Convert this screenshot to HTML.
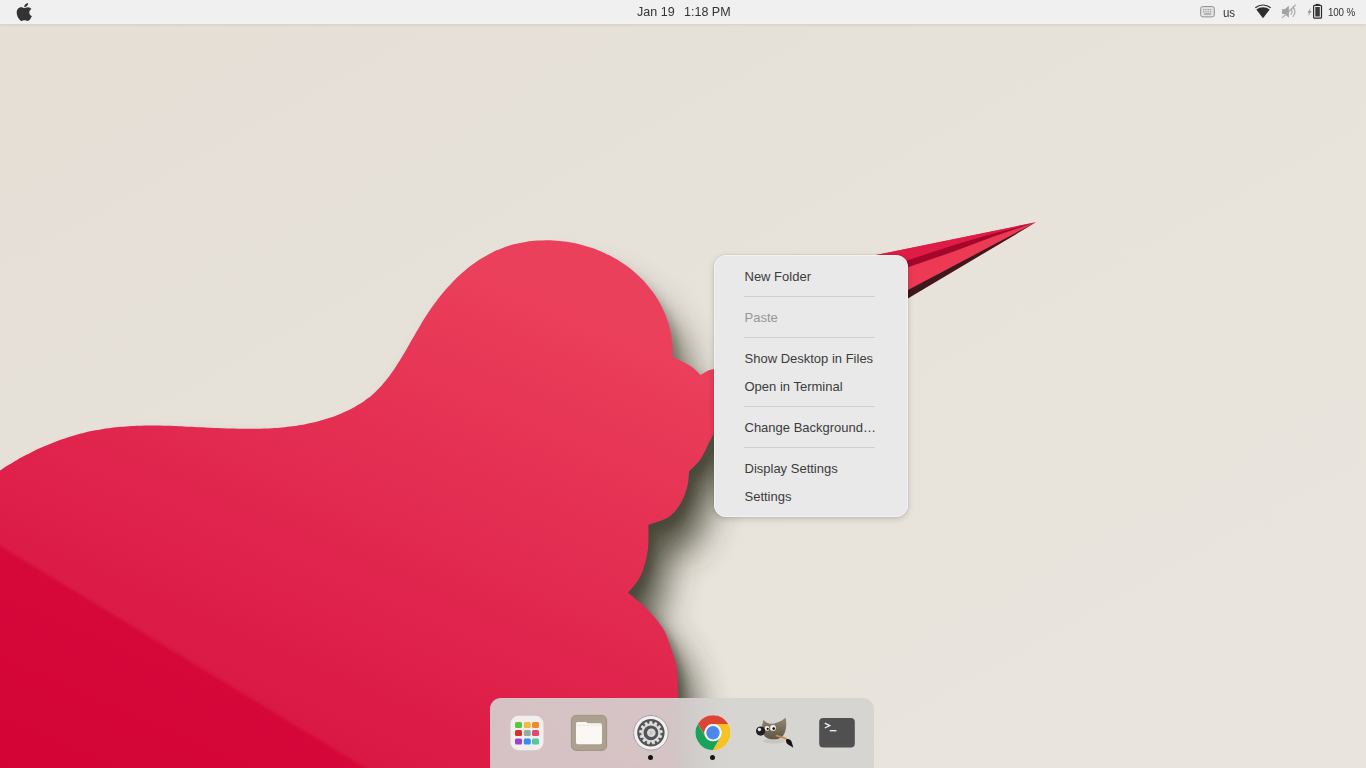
<!DOCTYPE html>
<html><head><meta charset="utf-8">
<style>
html,body{margin:0;padding:0;width:1366px;height:768px;overflow:hidden}
body{position:relative;font-family:"Liberation Sans",sans-serif;background:#e6e1da}
#wall{position:absolute;left:0;top:0;width:1366px;height:768px}
#topbar{position:absolute;left:0;top:0;width:1366px;height:24px;background:linear-gradient(#f0f0f2 0,#f0f0f0 19px,#f3f2ee 24px);color:#333;box-shadow:0 1px 3px rgba(60,55,40,0.10)}
.tb{position:absolute;top:0;height:24px;line-height:24px;font-size:12px;white-space:nowrap}
#menu{position:absolute;left:714px;top:255px;width:194px;height:262px;background:#e9e9e9;border-radius:12px;box-shadow:inset 0 0 0 1px rgba(255,255,255,0.45),0 0 0 1px rgba(0,0,0,0.04),0 2px 6px rgba(0,0,0,0.16)}
.mi{position:absolute;left:30.5px;font-size:13px;color:#3c3c3c;white-space:nowrap;line-height:16px}
.sep{position:absolute;left:30px;width:131px;height:1px;background:#cfcfcf}
#dock{position:absolute;left:490px;top:698px;width:384px;height:80px;border-radius:11px;background:rgba(213,211,209,0.91);-webkit-backdrop-filter:blur(14px);backdrop-filter:blur(14px)}
.ic{position:absolute}
.dot{position:absolute;width:5px;height:5px;border-radius:50%;background:#1a1a1a}
</style></head><body>
<svg id="wall" width="1366" height="768" viewBox="0 0 1366 768">
<defs>
<linearGradient id="bg" x1="0" y1="0" x2="1" y2="1"><stop offset="0" stop-color="#e5dfd6"/><stop offset="1" stop-color="#e9e5de"/></linearGradient>
<linearGradient id="red" x1="0" y1="1" x2="0.6" y2="0"><stop offset="0" stop-color="#d40c3a"/><stop offset="0.5" stop-color="#e0244d"/><stop offset="1" stop-color="#eb405b"/></linearGradient>
<filter id="bl1" x="-30%" y="-30%" width="160%" height="160%"><feGaussianBlur stdDeviation="17"/></filter>
<filter id="bl2" x="-30%" y="-30%" width="160%" height="160%"><feGaussianBlur stdDeviation="5"/></filter>
<linearGradient id="shg" gradientUnits="userSpaceOnUse" x1="0" y1="230" x2="0" y2="460"><stop offset="0" stop-color="#fff" stop-opacity="0.3"/><stop offset="0.45" stop-color="#fff" stop-opacity="0.75"/><stop offset="1" stop-color="#fff" stop-opacity="1"/></linearGradient>
<mask id="shm" maskUnits="userSpaceOnUse" x="0" y="0" width="1366" height="768"><rect width="1366" height="768" fill="url(#shg)"/></mask>
<filter id="soft" x="-10%" y="-10%" width="120%" height="120%"><feGaussianBlur stdDeviation="1.5"/></filter>
</defs>
<rect width="1366" height="768" fill="url(#bg)"/>
<clipPath id="cp"><path d="M-9.7 477.3 C-9.0 476.8 -6.9 475.3 -5.5 474.3 C-4.1 473.3 -2.6 472.3 -1.2 471.3 C0.2 470.3 1.6 469.3 3.1 468.4 C4.6 467.4 6.1 466.5 7.6 465.6 C9.1 464.7 10.6 463.8 12.1 462.9 C13.6 462.0 15.1 461.1 16.6 460.2 C18.1 459.3 19.6 458.5 21.2 457.6 C22.8 456.8 24.3 455.9 25.9 455.1 C27.5 454.3 29.0 453.5 30.6 452.7 C32.2 451.9 33.8 451.1 35.4 450.3 C37.0 449.5 38.6 448.8 40.2 448.1 C41.8 447.4 43.5 446.7 45.1 446.0 C46.7 445.3 48.4 444.6 50.0 443.9 C51.6 443.2 53.2 442.6 54.9 442.0 C56.5 441.4 58.2 440.7 59.9 440.1 C61.6 439.5 63.2 439.0 64.9 438.4 C66.6 437.8 68.2 437.2 69.9 436.7 C71.6 436.2 73.3 435.7 75.0 435.2 C76.7 434.7 78.3 434.2 80.0 433.8 C81.7 433.4 83.4 432.9 85.1 432.5 C86.8 432.1 88.5 431.7 90.2 431.3 C91.9 430.9 93.7 430.6 95.4 430.3 C97.1 430.0 98.8 429.7 100.5 429.4 C102.2 429.1 103.9 428.9 105.6 428.6 C107.3 428.4 109.1 428.1 110.8 427.9 C112.5 427.7 114.2 427.5 115.9 427.3 C117.6 427.1 119.4 427.0 121.1 426.8 C122.8 426.6 124.6 426.5 126.3 426.4 C128.0 426.3 129.8 426.2 131.5 426.1 C133.2 426.0 135.0 425.9 136.7 425.8 C138.4 425.7 140.2 425.7 141.9 425.7 C143.6 425.7 145.3 425.6 147.1 425.6 C148.8 425.6 150.7 425.6 152.4 425.6 C154.2 425.6 155.8 425.6 157.6 425.6 C159.3 425.6 161.2 425.7 162.9 425.7 C164.7 425.7 166.3 425.8 168.1 425.8 C169.8 425.9 171.6 425.9 173.4 426.0 C175.2 426.1 176.9 426.1 178.7 426.2 C180.5 426.3 182.2 426.3 184.0 426.4 C185.8 426.5 187.5 426.6 189.3 426.7 C191.1 426.8 192.8 426.8 194.6 426.9 C196.4 427.0 198.1 427.1 199.9 427.2 C201.7 427.3 203.4 427.3 205.2 427.4 C207.0 427.5 208.7 427.6 210.5 427.7 C212.3 427.8 214.0 427.9 215.8 428.0 C217.6 428.1 219.4 428.1 221.2 428.2 C223.0 428.3 224.7 428.3 226.5 428.4 C228.3 428.5 230.1 428.6 231.9 428.6 C233.7 428.7 235.4 428.7 237.2 428.7 C239.0 428.7 240.7 428.8 242.5 428.8 C244.3 428.8 246.0 428.8 247.8 428.8 C249.6 428.8 251.4 428.8 253.2 428.8 C255.0 428.8 256.7 428.8 258.5 428.8 C260.3 428.8 262.1 428.7 263.8 428.6 C265.6 428.5 267.2 428.5 269.0 428.4 C270.8 428.3 272.5 428.2 274.3 428.1 C276.1 428.0 277.9 427.9 279.6 427.7 C281.4 427.5 283.1 427.4 284.8 427.2 C286.5 427.0 288.3 426.8 290.0 426.6 C291.7 426.4 293.5 426.1 295.2 425.9 C296.9 425.6 298.7 425.4 300.4 425.1 C302.1 424.8 303.8 424.5 305.5 424.2 C307.2 423.9 309.0 423.5 310.7 423.1 C312.4 422.7 314.0 422.3 315.7 421.9 C317.4 421.5 319.1 421.1 320.8 420.6 C322.5 420.1 324.1 419.6 325.8 419.1 C327.5 418.6 329.1 418.1 330.8 417.5 C332.5 416.9 334.2 416.3 335.8 415.7 C337.4 415.1 339.1 414.4 340.7 413.7 C342.3 413.0 344.0 412.3 345.6 411.6 C347.2 410.9 348.8 410.1 350.4 409.3 C352.0 408.5 353.6 407.7 355.1 406.8 C356.6 405.9 358.1 405.0 359.6 404.1 C361.1 403.2 362.6 402.2 364.0 401.2 C365.4 400.2 366.8 399.2 368.2 398.1 C369.6 397.1 370.8 396.0 372.1 394.9 C373.4 393.8 374.7 392.6 375.9 391.4 C377.1 390.2 378.3 388.9 379.5 387.7 C380.7 386.4 381.8 385.2 382.9 383.9 C384.0 382.6 385.1 381.3 386.2 380.0 C387.3 378.7 388.4 377.3 389.4 375.9 C390.4 374.5 391.4 373.1 392.4 371.7 C393.4 370.3 394.3 368.8 395.3 367.4 C396.3 365.9 397.2 364.5 398.2 363.0 C399.1 361.5 400.1 360.0 401.0 358.5 C401.9 357.0 402.8 355.5 403.7 354.0 C404.6 352.5 405.5 350.9 406.4 349.4 C407.3 347.9 408.2 346.4 409.1 344.8 C410.0 343.2 410.8 341.7 411.7 340.1 C412.6 338.6 413.5 337.1 414.4 335.5 C415.3 333.9 416.2 332.4 417.1 330.8 C418.0 329.2 418.9 327.7 419.8 326.2 C420.7 324.7 421.6 323.1 422.5 321.6 C423.4 320.1 424.4 318.5 425.4 317.0 C426.4 315.5 427.3 314.0 428.3 312.5 C429.3 311.0 430.3 309.6 431.3 308.1 C432.3 306.7 433.3 305.2 434.4 303.8 C435.4 302.4 436.5 300.9 437.6 299.5 C438.7 298.1 439.8 296.7 440.9 295.3 C442.0 293.9 443.1 292.5 444.2 291.2 C445.3 289.9 446.5 288.6 447.7 287.3 C448.9 286.0 450.1 284.7 451.3 283.4 C452.5 282.1 453.7 280.9 454.9 279.7 C456.1 278.5 457.3 277.2 458.6 276.0 C459.9 274.8 461.2 273.7 462.5 272.6 C463.8 271.5 465.1 270.3 466.4 269.2 C467.7 268.1 469.0 267.0 470.4 266.0 C471.8 265.0 473.2 264.0 474.6 263.0 C476.0 262.0 477.4 261.0 478.8 260.1 C480.2 259.2 481.7 258.3 483.1 257.4 C484.6 256.5 486.0 255.7 487.5 254.9 C489.0 254.1 490.6 253.3 492.1 252.5 C493.6 251.7 495.1 251.0 496.7 250.3 C498.2 249.6 499.8 249.0 501.4 248.4 C503.0 247.8 504.7 247.2 506.3 246.6 C507.9 246.0 509.5 245.6 511.2 245.1 C512.9 244.6 514.6 244.2 516.3 243.8 C518.0 243.4 519.7 243.0 521.4 242.7 C523.1 242.4 524.9 242.1 526.6 241.8 C528.4 241.5 530.1 241.3 531.9 241.1 C533.7 240.9 535.4 240.7 537.2 240.6 C539.0 240.5 540.8 240.4 542.6 240.4 C544.4 240.4 546.2 240.3 548.0 240.3 C549.8 240.3 551.6 240.4 553.4 240.5 C555.2 240.6 557.1 240.7 558.9 240.9 C560.7 241.1 562.5 241.3 564.3 241.5 C566.1 241.7 567.8 242.0 569.6 242.3 C571.4 242.6 573.2 242.9 575.0 243.3 C576.8 243.7 578.5 244.1 580.2 244.5 C581.9 244.9 583.7 245.4 585.4 245.9 C587.1 246.4 588.9 246.9 590.6 247.4 C592.3 247.9 593.9 248.6 595.6 249.2 C597.3 249.8 599.0 250.5 600.6 251.2 C602.2 251.9 603.8 252.7 605.4 253.4 C607.0 254.2 608.6 254.9 610.2 255.7 C611.8 256.5 613.3 257.3 614.8 258.2 C616.3 259.1 617.8 260.0 619.3 260.9 C620.8 261.8 622.3 262.8 623.7 263.8 C625.1 264.8 626.5 265.8 627.9 266.8 C629.3 267.8 630.6 268.9 632.0 270.0 C633.4 271.1 634.7 272.2 636.0 273.4 C637.3 274.5 638.6 275.7 639.8 276.9 C641.0 278.1 642.2 279.4 643.4 280.6 C644.6 281.9 645.7 283.1 646.8 284.4 C647.9 285.7 649.0 287.0 650.1 288.4 C651.2 289.8 652.2 291.1 653.2 292.5 C654.2 293.9 655.2 295.3 656.1 296.7 C657.0 298.1 657.9 299.6 658.8 301.1 C659.6 302.6 660.4 304.2 661.2 305.7 C662.0 307.2 662.8 308.7 663.5 310.3 C664.2 311.9 664.9 313.5 665.5 315.1 C666.1 316.7 666.7 318.4 667.3 320.0 C667.9 321.6 668.4 323.3 668.9 325.0 C669.4 326.7 669.8 328.4 670.2 330.2 C670.6 331.9 670.9 333.7 671.2 335.5 C671.5 337.3 671.8 339.0 672.0 340.8 C672.2 342.6 672.4 344.5 672.5 346.3 C672.6 348.1 672.8 350.1 672.8 351.9 C672.8 353.7 672.8 356.1 672.8 357.0 C675.8 358.5 685.9 363.0 690.5 366.0 C695.1 369.0 698.8 373.5 700.5 375.0 C702.9 374.1 710.3 367.8 714.9 369.5 C719.5 371.2 725.1 378.2 728.0 385.0 C730.9 391.8 734.5 401.6 732.0 410.0 C729.5 418.4 718.1 427.7 713.0 435.6 C707.9 443.5 705.6 451.5 701.6 457.5 C697.6 463.5 691.1 469.2 689.0 471.6 C688.8 473.9 688.8 480.4 687.5 485.6 C686.2 490.8 684.1 497.6 681.0 502.8 C677.9 508.0 674.2 513.2 668.8 516.9 C663.3 520.5 651.8 523.4 648.4 524.7 C648.3 529.1 649.0 542.5 647.7 551.0 C646.4 559.5 643.9 569.0 640.6 576.0 C637.3 583.0 630.1 589.9 628.0 592.7 C631.2 595.4 641.2 603.1 647.0 609.0 C652.8 614.9 658.9 622.3 662.5 627.8 C666.1 633.3 666.4 635.4 668.8 641.9 C671.1 648.4 675.0 657.8 676.5 666.9 C678.0 676.0 677.6 686.1 678.0 696.6 C678.4 707.1 678.8 716.1 679.0 730.0 C679.2 743.9 679.0 771.7 679.0 780.0 L-10 780Z"/></clipPath>
<g mask="url(#shm)">
<path d="M-9.7 477.3 C-9.0 476.8 -6.9 475.3 -5.5 474.3 C-4.1 473.3 -2.6 472.3 -1.2 471.3 C0.2 470.3 1.6 469.3 3.1 468.4 C4.6 467.4 6.1 466.5 7.6 465.6 C9.1 464.7 10.6 463.8 12.1 462.9 C13.6 462.0 15.1 461.1 16.6 460.2 C18.1 459.3 19.6 458.5 21.2 457.6 C22.8 456.8 24.3 455.9 25.9 455.1 C27.5 454.3 29.0 453.5 30.6 452.7 C32.2 451.9 33.8 451.1 35.4 450.3 C37.0 449.5 38.6 448.8 40.2 448.1 C41.8 447.4 43.5 446.7 45.1 446.0 C46.7 445.3 48.4 444.6 50.0 443.9 C51.6 443.2 53.2 442.6 54.9 442.0 C56.5 441.4 58.2 440.7 59.9 440.1 C61.6 439.5 63.2 439.0 64.9 438.4 C66.6 437.8 68.2 437.2 69.9 436.7 C71.6 436.2 73.3 435.7 75.0 435.2 C76.7 434.7 78.3 434.2 80.0 433.8 C81.7 433.4 83.4 432.9 85.1 432.5 C86.8 432.1 88.5 431.7 90.2 431.3 C91.9 430.9 93.7 430.6 95.4 430.3 C97.1 430.0 98.8 429.7 100.5 429.4 C102.2 429.1 103.9 428.9 105.6 428.6 C107.3 428.4 109.1 428.1 110.8 427.9 C112.5 427.7 114.2 427.5 115.9 427.3 C117.6 427.1 119.4 427.0 121.1 426.8 C122.8 426.6 124.6 426.5 126.3 426.4 C128.0 426.3 129.8 426.2 131.5 426.1 C133.2 426.0 135.0 425.9 136.7 425.8 C138.4 425.7 140.2 425.7 141.9 425.7 C143.6 425.7 145.3 425.6 147.1 425.6 C148.8 425.6 150.7 425.6 152.4 425.6 C154.2 425.6 155.8 425.6 157.6 425.6 C159.3 425.6 161.2 425.7 162.9 425.7 C164.7 425.7 166.3 425.8 168.1 425.8 C169.8 425.9 171.6 425.9 173.4 426.0 C175.2 426.1 176.9 426.1 178.7 426.2 C180.5 426.3 182.2 426.3 184.0 426.4 C185.8 426.5 187.5 426.6 189.3 426.7 C191.1 426.8 192.8 426.8 194.6 426.9 C196.4 427.0 198.1 427.1 199.9 427.2 C201.7 427.3 203.4 427.3 205.2 427.4 C207.0 427.5 208.7 427.6 210.5 427.7 C212.3 427.8 214.0 427.9 215.8 428.0 C217.6 428.1 219.4 428.1 221.2 428.2 C223.0 428.3 224.7 428.3 226.5 428.4 C228.3 428.5 230.1 428.6 231.9 428.6 C233.7 428.7 235.4 428.7 237.2 428.7 C239.0 428.7 240.7 428.8 242.5 428.8 C244.3 428.8 246.0 428.8 247.8 428.8 C249.6 428.8 251.4 428.8 253.2 428.8 C255.0 428.8 256.7 428.8 258.5 428.8 C260.3 428.8 262.1 428.7 263.8 428.6 C265.6 428.5 267.2 428.5 269.0 428.4 C270.8 428.3 272.5 428.2 274.3 428.1 C276.1 428.0 277.9 427.9 279.6 427.7 C281.4 427.5 283.1 427.4 284.8 427.2 C286.5 427.0 288.3 426.8 290.0 426.6 C291.7 426.4 293.5 426.1 295.2 425.9 C296.9 425.6 298.7 425.4 300.4 425.1 C302.1 424.8 303.8 424.5 305.5 424.2 C307.2 423.9 309.0 423.5 310.7 423.1 C312.4 422.7 314.0 422.3 315.7 421.9 C317.4 421.5 319.1 421.1 320.8 420.6 C322.5 420.1 324.1 419.6 325.8 419.1 C327.5 418.6 329.1 418.1 330.8 417.5 C332.5 416.9 334.2 416.3 335.8 415.7 C337.4 415.1 339.1 414.4 340.7 413.7 C342.3 413.0 344.0 412.3 345.6 411.6 C347.2 410.9 348.8 410.1 350.4 409.3 C352.0 408.5 353.6 407.7 355.1 406.8 C356.6 405.9 358.1 405.0 359.6 404.1 C361.1 403.2 362.6 402.2 364.0 401.2 C365.4 400.2 366.8 399.2 368.2 398.1 C369.6 397.1 370.8 396.0 372.1 394.9 C373.4 393.8 374.7 392.6 375.9 391.4 C377.1 390.2 378.3 388.9 379.5 387.7 C380.7 386.4 381.8 385.2 382.9 383.9 C384.0 382.6 385.1 381.3 386.2 380.0 C387.3 378.7 388.4 377.3 389.4 375.9 C390.4 374.5 391.4 373.1 392.4 371.7 C393.4 370.3 394.3 368.8 395.3 367.4 C396.3 365.9 397.2 364.5 398.2 363.0 C399.1 361.5 400.1 360.0 401.0 358.5 C401.9 357.0 402.8 355.5 403.7 354.0 C404.6 352.5 405.5 350.9 406.4 349.4 C407.3 347.9 408.2 346.4 409.1 344.8 C410.0 343.2 410.8 341.7 411.7 340.1 C412.6 338.6 413.5 337.1 414.4 335.5 C415.3 333.9 416.2 332.4 417.1 330.8 C418.0 329.2 418.9 327.7 419.8 326.2 C420.7 324.7 421.6 323.1 422.5 321.6 C423.4 320.1 424.4 318.5 425.4 317.0 C426.4 315.5 427.3 314.0 428.3 312.5 C429.3 311.0 430.3 309.6 431.3 308.1 C432.3 306.7 433.3 305.2 434.4 303.8 C435.4 302.4 436.5 300.9 437.6 299.5 C438.7 298.1 439.8 296.7 440.9 295.3 C442.0 293.9 443.1 292.5 444.2 291.2 C445.3 289.9 446.5 288.6 447.7 287.3 C448.9 286.0 450.1 284.7 451.3 283.4 C452.5 282.1 453.7 280.9 454.9 279.7 C456.1 278.5 457.3 277.2 458.6 276.0 C459.9 274.8 461.2 273.7 462.5 272.6 C463.8 271.5 465.1 270.3 466.4 269.2 C467.7 268.1 469.0 267.0 470.4 266.0 C471.8 265.0 473.2 264.0 474.6 263.0 C476.0 262.0 477.4 261.0 478.8 260.1 C480.2 259.2 481.7 258.3 483.1 257.4 C484.6 256.5 486.0 255.7 487.5 254.9 C489.0 254.1 490.6 253.3 492.1 252.5 C493.6 251.7 495.1 251.0 496.7 250.3 C498.2 249.6 499.8 249.0 501.4 248.4 C503.0 247.8 504.7 247.2 506.3 246.6 C507.9 246.0 509.5 245.6 511.2 245.1 C512.9 244.6 514.6 244.2 516.3 243.8 C518.0 243.4 519.7 243.0 521.4 242.7 C523.1 242.4 524.9 242.1 526.6 241.8 C528.4 241.5 530.1 241.3 531.9 241.1 C533.7 240.9 535.4 240.7 537.2 240.6 C539.0 240.5 540.8 240.4 542.6 240.4 C544.4 240.4 546.2 240.3 548.0 240.3 C549.8 240.3 551.6 240.4 553.4 240.5 C555.2 240.6 557.1 240.7 558.9 240.9 C560.7 241.1 562.5 241.3 564.3 241.5 C566.1 241.7 567.8 242.0 569.6 242.3 C571.4 242.6 573.2 242.9 575.0 243.3 C576.8 243.7 578.5 244.1 580.2 244.5 C581.9 244.9 583.7 245.4 585.4 245.9 C587.1 246.4 588.9 246.9 590.6 247.4 C592.3 247.9 593.9 248.6 595.6 249.2 C597.3 249.8 599.0 250.5 600.6 251.2 C602.2 251.9 603.8 252.7 605.4 253.4 C607.0 254.2 608.6 254.9 610.2 255.7 C611.8 256.5 613.3 257.3 614.8 258.2 C616.3 259.1 617.8 260.0 619.3 260.9 C620.8 261.8 622.3 262.8 623.7 263.8 C625.1 264.8 626.5 265.8 627.9 266.8 C629.3 267.8 630.6 268.9 632.0 270.0 C633.4 271.1 634.7 272.2 636.0 273.4 C637.3 274.5 638.6 275.7 639.8 276.9 C641.0 278.1 642.2 279.4 643.4 280.6 C644.6 281.9 645.7 283.1 646.8 284.4 C647.9 285.7 649.0 287.0 650.1 288.4 C651.2 289.8 652.2 291.1 653.2 292.5 C654.2 293.9 655.2 295.3 656.1 296.7 C657.0 298.1 657.9 299.6 658.8 301.1 C659.6 302.6 660.4 304.2 661.2 305.7 C662.0 307.2 662.8 308.7 663.5 310.3 C664.2 311.9 664.9 313.5 665.5 315.1 C666.1 316.7 666.7 318.4 667.3 320.0 C667.9 321.6 668.4 323.3 668.9 325.0 C669.4 326.7 669.8 328.4 670.2 330.2 C670.6 331.9 670.9 333.7 671.2 335.5 C671.5 337.3 671.8 339.0 672.0 340.8 C672.2 342.6 672.4 344.5 672.5 346.3 C672.6 348.1 672.8 350.1 672.8 351.9 C672.8 353.7 672.8 356.1 672.8 357.0 C675.8 358.5 685.9 363.0 690.5 366.0 C695.1 369.0 698.8 373.5 700.5 375.0 C702.9 374.1 710.3 367.8 714.9 369.5 C719.5 371.2 725.1 378.2 728.0 385.0 C730.9 391.8 734.5 401.6 732.0 410.0 C729.5 418.4 718.1 427.7 713.0 435.6 C707.9 443.5 705.6 451.5 701.6 457.5 C697.6 463.5 691.1 469.2 689.0 471.6 C688.8 473.9 688.8 480.4 687.5 485.6 C686.2 490.8 684.1 497.6 681.0 502.8 C677.9 508.0 674.2 513.2 668.8 516.9 C663.3 520.5 651.8 523.4 648.4 524.7 C648.3 529.1 649.0 542.5 647.7 551.0 C646.4 559.5 643.9 569.0 640.6 576.0 C637.3 583.0 630.1 589.9 628.0 592.7 C631.2 595.4 641.2 603.1 647.0 609.0 C652.8 614.9 658.9 622.3 662.5 627.8 C666.1 633.3 666.4 635.4 668.8 641.9 C671.1 648.4 675.0 657.8 676.5 666.9 C678.0 676.0 677.6 686.1 678.0 696.6 C678.4 707.1 678.8 716.1 679.0 730.0 C679.2 743.9 679.0 771.7 679.0 780.0 L-10 780Z" fill="#3a3a2a" opacity="0.85" filter="url(#bl1)" transform="translate(18,32)"/>
<path d="M-9.7 477.3 C-9.0 476.8 -6.9 475.3 -5.5 474.3 C-4.1 473.3 -2.6 472.3 -1.2 471.3 C0.2 470.3 1.6 469.3 3.1 468.4 C4.6 467.4 6.1 466.5 7.6 465.6 C9.1 464.7 10.6 463.8 12.1 462.9 C13.6 462.0 15.1 461.1 16.6 460.2 C18.1 459.3 19.6 458.5 21.2 457.6 C22.8 456.8 24.3 455.9 25.9 455.1 C27.5 454.3 29.0 453.5 30.6 452.7 C32.2 451.9 33.8 451.1 35.4 450.3 C37.0 449.5 38.6 448.8 40.2 448.1 C41.8 447.4 43.5 446.7 45.1 446.0 C46.7 445.3 48.4 444.6 50.0 443.9 C51.6 443.2 53.2 442.6 54.9 442.0 C56.5 441.4 58.2 440.7 59.9 440.1 C61.6 439.5 63.2 439.0 64.9 438.4 C66.6 437.8 68.2 437.2 69.9 436.7 C71.6 436.2 73.3 435.7 75.0 435.2 C76.7 434.7 78.3 434.2 80.0 433.8 C81.7 433.4 83.4 432.9 85.1 432.5 C86.8 432.1 88.5 431.7 90.2 431.3 C91.9 430.9 93.7 430.6 95.4 430.3 C97.1 430.0 98.8 429.7 100.5 429.4 C102.2 429.1 103.9 428.9 105.6 428.6 C107.3 428.4 109.1 428.1 110.8 427.9 C112.5 427.7 114.2 427.5 115.9 427.3 C117.6 427.1 119.4 427.0 121.1 426.8 C122.8 426.6 124.6 426.5 126.3 426.4 C128.0 426.3 129.8 426.2 131.5 426.1 C133.2 426.0 135.0 425.9 136.7 425.8 C138.4 425.7 140.2 425.7 141.9 425.7 C143.6 425.7 145.3 425.6 147.1 425.6 C148.8 425.6 150.7 425.6 152.4 425.6 C154.2 425.6 155.8 425.6 157.6 425.6 C159.3 425.6 161.2 425.7 162.9 425.7 C164.7 425.7 166.3 425.8 168.1 425.8 C169.8 425.9 171.6 425.9 173.4 426.0 C175.2 426.1 176.9 426.1 178.7 426.2 C180.5 426.3 182.2 426.3 184.0 426.4 C185.8 426.5 187.5 426.6 189.3 426.7 C191.1 426.8 192.8 426.8 194.6 426.9 C196.4 427.0 198.1 427.1 199.9 427.2 C201.7 427.3 203.4 427.3 205.2 427.4 C207.0 427.5 208.7 427.6 210.5 427.7 C212.3 427.8 214.0 427.9 215.8 428.0 C217.6 428.1 219.4 428.1 221.2 428.2 C223.0 428.3 224.7 428.3 226.5 428.4 C228.3 428.5 230.1 428.6 231.9 428.6 C233.7 428.7 235.4 428.7 237.2 428.7 C239.0 428.7 240.7 428.8 242.5 428.8 C244.3 428.8 246.0 428.8 247.8 428.8 C249.6 428.8 251.4 428.8 253.2 428.8 C255.0 428.8 256.7 428.8 258.5 428.8 C260.3 428.8 262.1 428.7 263.8 428.6 C265.6 428.5 267.2 428.5 269.0 428.4 C270.8 428.3 272.5 428.2 274.3 428.1 C276.1 428.0 277.9 427.9 279.6 427.7 C281.4 427.5 283.1 427.4 284.8 427.2 C286.5 427.0 288.3 426.8 290.0 426.6 C291.7 426.4 293.5 426.1 295.2 425.9 C296.9 425.6 298.7 425.4 300.4 425.1 C302.1 424.8 303.8 424.5 305.5 424.2 C307.2 423.9 309.0 423.5 310.7 423.1 C312.4 422.7 314.0 422.3 315.7 421.9 C317.4 421.5 319.1 421.1 320.8 420.6 C322.5 420.1 324.1 419.6 325.8 419.1 C327.5 418.6 329.1 418.1 330.8 417.5 C332.5 416.9 334.2 416.3 335.8 415.7 C337.4 415.1 339.1 414.4 340.7 413.7 C342.3 413.0 344.0 412.3 345.6 411.6 C347.2 410.9 348.8 410.1 350.4 409.3 C352.0 408.5 353.6 407.7 355.1 406.8 C356.6 405.9 358.1 405.0 359.6 404.1 C361.1 403.2 362.6 402.2 364.0 401.2 C365.4 400.2 366.8 399.2 368.2 398.1 C369.6 397.1 370.8 396.0 372.1 394.9 C373.4 393.8 374.7 392.6 375.9 391.4 C377.1 390.2 378.3 388.9 379.5 387.7 C380.7 386.4 381.8 385.2 382.9 383.9 C384.0 382.6 385.1 381.3 386.2 380.0 C387.3 378.7 388.4 377.3 389.4 375.9 C390.4 374.5 391.4 373.1 392.4 371.7 C393.4 370.3 394.3 368.8 395.3 367.4 C396.3 365.9 397.2 364.5 398.2 363.0 C399.1 361.5 400.1 360.0 401.0 358.5 C401.9 357.0 402.8 355.5 403.7 354.0 C404.6 352.5 405.5 350.9 406.4 349.4 C407.3 347.9 408.2 346.4 409.1 344.8 C410.0 343.2 410.8 341.7 411.7 340.1 C412.6 338.6 413.5 337.1 414.4 335.5 C415.3 333.9 416.2 332.4 417.1 330.8 C418.0 329.2 418.9 327.7 419.8 326.2 C420.7 324.7 421.6 323.1 422.5 321.6 C423.4 320.1 424.4 318.5 425.4 317.0 C426.4 315.5 427.3 314.0 428.3 312.5 C429.3 311.0 430.3 309.6 431.3 308.1 C432.3 306.7 433.3 305.2 434.4 303.8 C435.4 302.4 436.5 300.9 437.6 299.5 C438.7 298.1 439.8 296.7 440.9 295.3 C442.0 293.9 443.1 292.5 444.2 291.2 C445.3 289.9 446.5 288.6 447.7 287.3 C448.9 286.0 450.1 284.7 451.3 283.4 C452.5 282.1 453.7 280.9 454.9 279.7 C456.1 278.5 457.3 277.2 458.6 276.0 C459.9 274.8 461.2 273.7 462.5 272.6 C463.8 271.5 465.1 270.3 466.4 269.2 C467.7 268.1 469.0 267.0 470.4 266.0 C471.8 265.0 473.2 264.0 474.6 263.0 C476.0 262.0 477.4 261.0 478.8 260.1 C480.2 259.2 481.7 258.3 483.1 257.4 C484.6 256.5 486.0 255.7 487.5 254.9 C489.0 254.1 490.6 253.3 492.1 252.5 C493.6 251.7 495.1 251.0 496.7 250.3 C498.2 249.6 499.8 249.0 501.4 248.4 C503.0 247.8 504.7 247.2 506.3 246.6 C507.9 246.0 509.5 245.6 511.2 245.1 C512.9 244.6 514.6 244.2 516.3 243.8 C518.0 243.4 519.7 243.0 521.4 242.7 C523.1 242.4 524.9 242.1 526.6 241.8 C528.4 241.5 530.1 241.3 531.9 241.1 C533.7 240.9 535.4 240.7 537.2 240.6 C539.0 240.5 540.8 240.4 542.6 240.4 C544.4 240.4 546.2 240.3 548.0 240.3 C549.8 240.3 551.6 240.4 553.4 240.5 C555.2 240.6 557.1 240.7 558.9 240.9 C560.7 241.1 562.5 241.3 564.3 241.5 C566.1 241.7 567.8 242.0 569.6 242.3 C571.4 242.6 573.2 242.9 575.0 243.3 C576.8 243.7 578.5 244.1 580.2 244.5 C581.9 244.9 583.7 245.4 585.4 245.9 C587.1 246.4 588.9 246.9 590.6 247.4 C592.3 247.9 593.9 248.6 595.6 249.2 C597.3 249.8 599.0 250.5 600.6 251.2 C602.2 251.9 603.8 252.7 605.4 253.4 C607.0 254.2 608.6 254.9 610.2 255.7 C611.8 256.5 613.3 257.3 614.8 258.2 C616.3 259.1 617.8 260.0 619.3 260.9 C620.8 261.8 622.3 262.8 623.7 263.8 C625.1 264.8 626.5 265.8 627.9 266.8 C629.3 267.8 630.6 268.9 632.0 270.0 C633.4 271.1 634.7 272.2 636.0 273.4 C637.3 274.5 638.6 275.7 639.8 276.9 C641.0 278.1 642.2 279.4 643.4 280.6 C644.6 281.9 645.7 283.1 646.8 284.4 C647.9 285.7 649.0 287.0 650.1 288.4 C651.2 289.8 652.2 291.1 653.2 292.5 C654.2 293.9 655.2 295.3 656.1 296.7 C657.0 298.1 657.9 299.6 658.8 301.1 C659.6 302.6 660.4 304.2 661.2 305.7 C662.0 307.2 662.8 308.7 663.5 310.3 C664.2 311.9 664.9 313.5 665.5 315.1 C666.1 316.7 666.7 318.4 667.3 320.0 C667.9 321.6 668.4 323.3 668.9 325.0 C669.4 326.7 669.8 328.4 670.2 330.2 C670.6 331.9 670.9 333.7 671.2 335.5 C671.5 337.3 671.8 339.0 672.0 340.8 C672.2 342.6 672.4 344.5 672.5 346.3 C672.6 348.1 672.8 350.1 672.8 351.9 C672.8 353.7 672.8 356.1 672.8 357.0 C675.8 358.5 685.9 363.0 690.5 366.0 C695.1 369.0 698.8 373.5 700.5 375.0 C702.9 374.1 710.3 367.8 714.9 369.5 C719.5 371.2 725.1 378.2 728.0 385.0 C730.9 391.8 734.5 401.6 732.0 410.0 C729.5 418.4 718.1 427.7 713.0 435.6 C707.9 443.5 705.6 451.5 701.6 457.5 C697.6 463.5 691.1 469.2 689.0 471.6 C688.8 473.9 688.8 480.4 687.5 485.6 C686.2 490.8 684.1 497.6 681.0 502.8 C677.9 508.0 674.2 513.2 668.8 516.9 C663.3 520.5 651.8 523.4 648.4 524.7 C648.3 529.1 649.0 542.5 647.7 551.0 C646.4 559.5 643.9 569.0 640.6 576.0 C637.3 583.0 630.1 589.9 628.0 592.7 C631.2 595.4 641.2 603.1 647.0 609.0 C652.8 614.9 658.9 622.3 662.5 627.8 C666.1 633.3 666.4 635.4 668.8 641.9 C671.1 648.4 675.0 657.8 676.5 666.9 C678.0 676.0 677.6 686.1 678.0 696.6 C678.4 707.1 678.8 716.1 679.0 730.0 C679.2 743.9 679.0 771.7 679.0 780.0 L-10 780Z" fill="#3a3a2a" opacity="0.5" filter="url(#bl2)" transform="translate(6,9)"/>
</g>
<path d="M-9.7 477.3 C-9.0 476.8 -6.9 475.3 -5.5 474.3 C-4.1 473.3 -2.6 472.3 -1.2 471.3 C0.2 470.3 1.6 469.3 3.1 468.4 C4.6 467.4 6.1 466.5 7.6 465.6 C9.1 464.7 10.6 463.8 12.1 462.9 C13.6 462.0 15.1 461.1 16.6 460.2 C18.1 459.3 19.6 458.5 21.2 457.6 C22.8 456.8 24.3 455.9 25.9 455.1 C27.5 454.3 29.0 453.5 30.6 452.7 C32.2 451.9 33.8 451.1 35.4 450.3 C37.0 449.5 38.6 448.8 40.2 448.1 C41.8 447.4 43.5 446.7 45.1 446.0 C46.7 445.3 48.4 444.6 50.0 443.9 C51.6 443.2 53.2 442.6 54.9 442.0 C56.5 441.4 58.2 440.7 59.9 440.1 C61.6 439.5 63.2 439.0 64.9 438.4 C66.6 437.8 68.2 437.2 69.9 436.7 C71.6 436.2 73.3 435.7 75.0 435.2 C76.7 434.7 78.3 434.2 80.0 433.8 C81.7 433.4 83.4 432.9 85.1 432.5 C86.8 432.1 88.5 431.7 90.2 431.3 C91.9 430.9 93.7 430.6 95.4 430.3 C97.1 430.0 98.8 429.7 100.5 429.4 C102.2 429.1 103.9 428.9 105.6 428.6 C107.3 428.4 109.1 428.1 110.8 427.9 C112.5 427.7 114.2 427.5 115.9 427.3 C117.6 427.1 119.4 427.0 121.1 426.8 C122.8 426.6 124.6 426.5 126.3 426.4 C128.0 426.3 129.8 426.2 131.5 426.1 C133.2 426.0 135.0 425.9 136.7 425.8 C138.4 425.7 140.2 425.7 141.9 425.7 C143.6 425.7 145.3 425.6 147.1 425.6 C148.8 425.6 150.7 425.6 152.4 425.6 C154.2 425.6 155.8 425.6 157.6 425.6 C159.3 425.6 161.2 425.7 162.9 425.7 C164.7 425.7 166.3 425.8 168.1 425.8 C169.8 425.9 171.6 425.9 173.4 426.0 C175.2 426.1 176.9 426.1 178.7 426.2 C180.5 426.3 182.2 426.3 184.0 426.4 C185.8 426.5 187.5 426.6 189.3 426.7 C191.1 426.8 192.8 426.8 194.6 426.9 C196.4 427.0 198.1 427.1 199.9 427.2 C201.7 427.3 203.4 427.3 205.2 427.4 C207.0 427.5 208.7 427.6 210.5 427.7 C212.3 427.8 214.0 427.9 215.8 428.0 C217.6 428.1 219.4 428.1 221.2 428.2 C223.0 428.3 224.7 428.3 226.5 428.4 C228.3 428.5 230.1 428.6 231.9 428.6 C233.7 428.7 235.4 428.7 237.2 428.7 C239.0 428.7 240.7 428.8 242.5 428.8 C244.3 428.8 246.0 428.8 247.8 428.8 C249.6 428.8 251.4 428.8 253.2 428.8 C255.0 428.8 256.7 428.8 258.5 428.8 C260.3 428.8 262.1 428.7 263.8 428.6 C265.6 428.5 267.2 428.5 269.0 428.4 C270.8 428.3 272.5 428.2 274.3 428.1 C276.1 428.0 277.9 427.9 279.6 427.7 C281.4 427.5 283.1 427.4 284.8 427.2 C286.5 427.0 288.3 426.8 290.0 426.6 C291.7 426.4 293.5 426.1 295.2 425.9 C296.9 425.6 298.7 425.4 300.4 425.1 C302.1 424.8 303.8 424.5 305.5 424.2 C307.2 423.9 309.0 423.5 310.7 423.1 C312.4 422.7 314.0 422.3 315.7 421.9 C317.4 421.5 319.1 421.1 320.8 420.6 C322.5 420.1 324.1 419.6 325.8 419.1 C327.5 418.6 329.1 418.1 330.8 417.5 C332.5 416.9 334.2 416.3 335.8 415.7 C337.4 415.1 339.1 414.4 340.7 413.7 C342.3 413.0 344.0 412.3 345.6 411.6 C347.2 410.9 348.8 410.1 350.4 409.3 C352.0 408.5 353.6 407.7 355.1 406.8 C356.6 405.9 358.1 405.0 359.6 404.1 C361.1 403.2 362.6 402.2 364.0 401.2 C365.4 400.2 366.8 399.2 368.2 398.1 C369.6 397.1 370.8 396.0 372.1 394.9 C373.4 393.8 374.7 392.6 375.9 391.4 C377.1 390.2 378.3 388.9 379.5 387.7 C380.7 386.4 381.8 385.2 382.9 383.9 C384.0 382.6 385.1 381.3 386.2 380.0 C387.3 378.7 388.4 377.3 389.4 375.9 C390.4 374.5 391.4 373.1 392.4 371.7 C393.4 370.3 394.3 368.8 395.3 367.4 C396.3 365.9 397.2 364.5 398.2 363.0 C399.1 361.5 400.1 360.0 401.0 358.5 C401.9 357.0 402.8 355.5 403.7 354.0 C404.6 352.5 405.5 350.9 406.4 349.4 C407.3 347.9 408.2 346.4 409.1 344.8 C410.0 343.2 410.8 341.7 411.7 340.1 C412.6 338.6 413.5 337.1 414.4 335.5 C415.3 333.9 416.2 332.4 417.1 330.8 C418.0 329.2 418.9 327.7 419.8 326.2 C420.7 324.7 421.6 323.1 422.5 321.6 C423.4 320.1 424.4 318.5 425.4 317.0 C426.4 315.5 427.3 314.0 428.3 312.5 C429.3 311.0 430.3 309.6 431.3 308.1 C432.3 306.7 433.3 305.2 434.4 303.8 C435.4 302.4 436.5 300.9 437.6 299.5 C438.7 298.1 439.8 296.7 440.9 295.3 C442.0 293.9 443.1 292.5 444.2 291.2 C445.3 289.9 446.5 288.6 447.7 287.3 C448.9 286.0 450.1 284.7 451.3 283.4 C452.5 282.1 453.7 280.9 454.9 279.7 C456.1 278.5 457.3 277.2 458.6 276.0 C459.9 274.8 461.2 273.7 462.5 272.6 C463.8 271.5 465.1 270.3 466.4 269.2 C467.7 268.1 469.0 267.0 470.4 266.0 C471.8 265.0 473.2 264.0 474.6 263.0 C476.0 262.0 477.4 261.0 478.8 260.1 C480.2 259.2 481.7 258.3 483.1 257.4 C484.6 256.5 486.0 255.7 487.5 254.9 C489.0 254.1 490.6 253.3 492.1 252.5 C493.6 251.7 495.1 251.0 496.7 250.3 C498.2 249.6 499.8 249.0 501.4 248.4 C503.0 247.8 504.7 247.2 506.3 246.6 C507.9 246.0 509.5 245.6 511.2 245.1 C512.9 244.6 514.6 244.2 516.3 243.8 C518.0 243.4 519.7 243.0 521.4 242.7 C523.1 242.4 524.9 242.1 526.6 241.8 C528.4 241.5 530.1 241.3 531.9 241.1 C533.7 240.9 535.4 240.7 537.2 240.6 C539.0 240.5 540.8 240.4 542.6 240.4 C544.4 240.4 546.2 240.3 548.0 240.3 C549.8 240.3 551.6 240.4 553.4 240.5 C555.2 240.6 557.1 240.7 558.9 240.9 C560.7 241.1 562.5 241.3 564.3 241.5 C566.1 241.7 567.8 242.0 569.6 242.3 C571.4 242.6 573.2 242.9 575.0 243.3 C576.8 243.7 578.5 244.1 580.2 244.5 C581.9 244.9 583.7 245.4 585.4 245.9 C587.1 246.4 588.9 246.9 590.6 247.4 C592.3 247.9 593.9 248.6 595.6 249.2 C597.3 249.8 599.0 250.5 600.6 251.2 C602.2 251.9 603.8 252.7 605.4 253.4 C607.0 254.2 608.6 254.9 610.2 255.7 C611.8 256.5 613.3 257.3 614.8 258.2 C616.3 259.1 617.8 260.0 619.3 260.9 C620.8 261.8 622.3 262.8 623.7 263.8 C625.1 264.8 626.5 265.8 627.9 266.8 C629.3 267.8 630.6 268.9 632.0 270.0 C633.4 271.1 634.7 272.2 636.0 273.4 C637.3 274.5 638.6 275.7 639.8 276.9 C641.0 278.1 642.2 279.4 643.4 280.6 C644.6 281.9 645.7 283.1 646.8 284.4 C647.9 285.7 649.0 287.0 650.1 288.4 C651.2 289.8 652.2 291.1 653.2 292.5 C654.2 293.9 655.2 295.3 656.1 296.7 C657.0 298.1 657.9 299.6 658.8 301.1 C659.6 302.6 660.4 304.2 661.2 305.7 C662.0 307.2 662.8 308.7 663.5 310.3 C664.2 311.9 664.9 313.5 665.5 315.1 C666.1 316.7 666.7 318.4 667.3 320.0 C667.9 321.6 668.4 323.3 668.9 325.0 C669.4 326.7 669.8 328.4 670.2 330.2 C670.6 331.9 670.9 333.7 671.2 335.5 C671.5 337.3 671.8 339.0 672.0 340.8 C672.2 342.6 672.4 344.5 672.5 346.3 C672.6 348.1 672.8 350.1 672.8 351.9 C672.8 353.7 672.8 356.1 672.8 357.0 C675.8 358.5 685.9 363.0 690.5 366.0 C695.1 369.0 698.8 373.5 700.5 375.0 C702.9 374.1 710.3 367.8 714.9 369.5 C719.5 371.2 725.1 378.2 728.0 385.0 C730.9 391.8 734.5 401.6 732.0 410.0 C729.5 418.4 718.1 427.7 713.0 435.6 C707.9 443.5 705.6 451.5 701.6 457.5 C697.6 463.5 691.1 469.2 689.0 471.6 C688.8 473.9 688.8 480.4 687.5 485.6 C686.2 490.8 684.1 497.6 681.0 502.8 C677.9 508.0 674.2 513.2 668.8 516.9 C663.3 520.5 651.8 523.4 648.4 524.7 C648.3 529.1 649.0 542.5 647.7 551.0 C646.4 559.5 643.9 569.0 640.6 576.0 C637.3 583.0 630.1 589.9 628.0 592.7 C631.2 595.4 641.2 603.1 647.0 609.0 C652.8 614.9 658.9 622.3 662.5 627.8 C666.1 633.3 666.4 635.4 668.8 641.9 C671.1 648.4 675.0 657.8 676.5 666.9 C678.0 676.0 677.6 686.1 678.0 696.6 C678.4 707.1 678.8 716.1 679.0 730.0 C679.2 743.9 679.0 771.7 679.0 780.0 L-10 780Z" fill="url(#red)"/>
<g clip-path="url(#cp)"><polygon points="-10,539.6 385,780 -10,780" fill="#d40034" opacity="0.7" filter="url(#soft)"/></g>
<g id="plane">
<polygon points="860,258.3 1035.8,222.3 860,326.9" fill="#ec3a55"/>
<path d="M860 258.3 L1035.8 222.3 L992.8 233.6 L953.75 245 L908 260 L860 276 Z" fill="#df1c45"/>
<path d="M860 276 L908 260 L953.75 245 L992.8 233.6 L1035.8 222.3 L992.8 236.7 L953.75 251.5 L908 267.3 L860 284 Z" fill="#a5072c"/>
<path d="M860 315.6 L908 290.1 L1035.8 222.3 L908 298.3 L860 326.9 Z" fill="#3b191d"/>
</g>
</svg>
<div id="topbar">
  <svg style="position:absolute;left:0;top:0" width="1366" height="24">
    <path transform="translate(16.54,1.61) scale(0.0402)" fill="#333" d="M318.7 268.7c-.2-36.7 16.4-64.4 50-84.8-18.8-26.9-47.2-41.7-84.7-44.6-35.5-2.8-74.3 20.7-88.5 20.7-15 0-49.4-19.7-76.4-19.7C63.3 141.2 4 184.8 4 273.5q0 39.3 14.4 81.2c12.8 36.7 59 126.7 107.2 125.2 25.2-.6 43-17.9 75.8-17.9 31.8 0 48.3 17.9 76.4 17.9 48.6-.7 90.4-82.5 102.6-119.3-65.2-30.7-61.7-90-61.7-91.9zm-56.6-164.2c27.3-32.4 24.8-61.9 24-72.5-24.1 1.4-52 16.4-67.9 34.9-17.5 19.8-27.8 44.3-25.5 71.9 26.1 2 49.9-11.4 69.4-34.3z"/>
    <rect x="1200.7" y="6.6" width="13.6" height="10.3" rx="2" fill="#e4e4e4" stroke="#8e8e8e" stroke-width="1"/>
    <g fill="#959595"><rect x="1203" y="9" width="1.3" height="1.2"/><rect x="1205.3" y="9" width="1.3" height="1.2"/><rect x="1207.6" y="9" width="1.3" height="1.2"/><rect x="1209.9" y="9" width="1.3" height="1.2"/><rect x="1203" y="11.2" width="1.3" height="1.2"/><rect x="1205.3" y="11.2" width="1.3" height="1.2"/><rect x="1207.6" y="11.2" width="1.3" height="1.2"/><rect x="1209.9" y="11.2" width="1.3" height="1.2"/><rect x="1204.2" y="13.4" width="7" height="1.2"/></g>
    <path d="M1263 18.2 L1256.3 9.6 A10.6 10.6 0 0 1 1269.7 9.6 Z" fill="#2e2e2e"/>
    <path d="M1255.3 7.7 A12.4 12.4 0 0 1 1270.7 7.7" fill="none" stroke="#2e2e2e" stroke-width="1.2"/>
    <path d="M1282 9.3 h2.7 l4.2 -3.6 v12 l-4.2 -3.6 h-2.7 z" fill="#a2a2a2"/>
    <g fill="none" stroke="#a8a8a8" stroke-width="1.2" stroke-linecap="round">
      <path d="M1290.9 9.4 a3.4 3.4 0 0 1 0 4.8"/>
      <path d="M1293 7.2 a6.4 6.4 0 0 1 0 9.2"/>
      <path d="M1282.3 17.6 L1295.3 5.2"/>
    </g>
    <path d="M1311 7.6 L1307.3 12.8 L1309.3 12.8 L1308 16.4 L1311.8 11 L1309.8 11 Z" fill="#9a9a9a"/>
    <rect x="1313.6" y="5.3" width="7.9" height="12.9" rx="1" fill="none" stroke="#2a2a2a" stroke-width="1.2"/>
    <rect x="1315.6" y="3.9" width="3.9" height="1.6" fill="#2a2a2a"/>
    <rect x="1315.3" y="7" width="4.5" height="9.5" fill="#3a3a3a"/>
  </svg>
  <div class="tb" style="left:637px;font-size:13.4px;top:0px;transform:scaleX(0.935);transform-origin:0 0">Jan 19</div>
  <div class="tb" style="left:684px;font-size:13.4px;top:0px;transform:scaleX(0.935);transform-origin:0 0">1:18 PM</div>
  <div class="tb" style="left:1222.5px;font-size:12.8px;top:1px;transform:scaleX(0.9);transform-origin:0 0;letter-spacing:-0.2px">us</div>
  <div class="tb" style="left:1328px;font-size:11.4px;top:0px;transform:scaleX(0.86);transform-origin:0 0;letter-spacing:-0.2px">100 %</div>
</div>
<div id="menu">
  <div class="mi" style="top:14px">New Folder</div>
  <div class="sep" style="top:41px"></div>
  <div class="mi" style="top:55px;color:#969696">Paste</div>
  <div class="sep" style="top:82px"></div>
  <div class="mi" style="top:96px">Show Desktop in Files</div>
  <div class="mi" style="top:124px">Open in Terminal</div>
  <div class="sep" style="top:151px"></div>
  <div class="mi" style="top:165px">Change Background…</div>
  <div class="sep" style="top:192px"></div>
  <div class="mi" style="top:206px">Display Settings</div>
  <div class="mi" style="top:234px">Settings</div>
</div>
<div id="dock">
<svg width="384" height="70" viewBox="490 698 384 70" style="position:absolute;left:0;top:0">
  <rect x="510.5" y="715.8" width="33" height="34.4" rx="8" fill="#f3eeee"/>
  <g>
   <rect x="515" y="722" width="7" height="6" rx="1.5" fill="#5cc443"/><rect x="523.8" y="722" width="7" height="6" rx="1.5" fill="#f2bd36"/><rect x="532" y="722" width="7" height="6" rx="1.5" fill="#ec8b2c"/>
   <rect x="515" y="730" width="7" height="6" rx="1.5" fill="#d3322a"/><rect x="523.8" y="730" width="7" height="6" rx="1.5" fill="#96aaa2"/><rect x="532" y="730" width="7" height="6" rx="1.5" fill="#e2476e"/>
   <rect x="515" y="738.6" width="7" height="6" rx="1.5" fill="#9a44cc"/><rect x="523.8" y="738.6" width="7" height="6" rx="1.5" fill="#2e8ff0"/><rect x="532" y="738.6" width="7" height="6" rx="1.5" fill="#52c6a0"/>
  </g>
  <rect x="571.4" y="715.4" width="35.2" height="35" rx="4.5" fill="#aba18e" stroke="#958b78" stroke-width="0.8"/>
  <path d="M576 723.5 q0-1.6 1.6-1.6 h8.5 l1.6 1.4 h12.6 q1.7 0 1.7 1.7 v17.6 q0 1.6-1.6 1.6 h-22.8 q-1.6 0-1.6-1.6 z" fill="#fbf8f4"/>
  <path d="M576 725.2 h26" stroke="#e8e2da" stroke-width="0.8"/>
  <circle cx="650.9" cy="732.8" r="17.3" fill="#f0f0f0" stroke="#9c9c9c" stroke-width="0.9"/>
  <circle cx="650.9" cy="732.8" r="13.7" fill="#545454"/>
  <g id="gear" fill="#dedede"><polygon points="649.57,723.90 649.91,721.44 651.89,721.44 652.23,723.90 653.86,724.30 655.30,722.28 657.06,723.21 656.21,725.54 657.47,726.65 659.68,725.53 660.81,727.17 658.98,728.84 659.58,730.41 662.05,730.44 662.29,732.42 659.90,733.05 659.69,734.71 661.87,735.90 661.17,737.76 658.75,737.20 657.80,738.58 659.17,740.64 657.69,741.96 655.81,740.34 654.32,741.12 654.58,743.59 652.65,744.06 651.74,741.76 650.06,741.76 649.15,744.06 647.22,743.59 647.48,741.12 645.99,740.34 644.11,741.96 642.63,740.64 644.00,738.58 643.05,737.20 640.63,737.76 639.93,735.90 642.11,734.71 641.90,733.05 639.51,732.42 639.75,730.44 642.22,730.41 642.82,728.84 640.99,727.17 642.12,725.53 644.33,726.65 645.59,725.54 644.74,723.21 646.50,722.28 647.94,724.30" stroke="#dedede" stroke-width="0.8" stroke-linejoin="round"/></g>
  <circle cx="650.9" cy="732.8" r="7.4" fill="#545454"/>
  <circle cx="651.3" cy="732.8" r="4.3" fill="#d8d8d8"/>
  <path d="M649.8 730.4 L654 732.8 L649.8 735.2 Z" fill="#c4c4c4"/>
  <circle cx="650.5" cy="757.4" r="2.5" fill="#141414"/>
  <circle cx="713" cy="732.7" r="17.5" fill="#fff"/>
  <path d="M713.00 724.10 L728.24 724.10 A17.50 17.50 0 0 0 697.93 723.80 L705.55 737.00 A8.60 8.60 0 0 1 713.00 724.10 Z" fill="#dd4436"/>
  <path d="M720.45 737.00 L712.83 750.20 A17.50 17.50 0 0 0 728.24 724.10 L713.00 724.10 A8.60 8.60 0 0 1 720.45 737.00 Z" fill="#f6c226"/>
  <path d="M705.55 737.00 L697.93 723.80 A17.50 17.50 0 0 0 712.83 750.20 L720.45 737.00 A8.60 8.60 0 0 1 705.55 737.00 Z" fill="#19a25a"/>
  <circle cx="713" cy="732.7" r="8.3" fill="#f4f8f4"/>
  <circle cx="713" cy="732.7" r="6.7" fill="#4a88ec"/>
  <circle cx="712.5" cy="757.4" r="2.5" fill="#141414"/>
  <g id="gimp">
   <defs><linearGradient id="gh" x1="0" y1="0" x2="0" y2="1"><stop offset="0" stop-color="#948a74"/><stop offset="1" stop-color="#5e5540"/></linearGradient></defs>
   <ellipse cx="774" cy="741" rx="11" ry="2.5" fill="#000" opacity="0.08"/>
   <path d="M763.4 719.8 C765.2 722.2 767.5 723.6 771 723.6 C776 723.4 781.5 721.5 785.5 717.4 C787 724 786.4 731.5 782.5 736.5 C779 739.8 771 740.2 766.5 737.8 C762.8 735.4 761.8 729.5 762.3 725 Z" fill="url(#gh)"/>
   <ellipse cx="772" cy="722.6" rx="3.2" ry="1.6" fill="#d6ccd6" opacity="0.6"/>
   <circle cx="767" cy="728.4" r="2.3" fill="#f2f2f2"/><circle cx="767.7" cy="728.8" r="1.1" fill="#111"/>
   <circle cx="773" cy="727.9" r="2.9" fill="#f4f4f4"/><circle cx="773.7" cy="728.6" r="1.35" fill="#111"/>
   <path d="M776.5 735.6 L786 738.6" stroke="#c08a55" stroke-width="1.7" stroke-linecap="round"/>
   <path d="M786.3 739.3 C788 738.3 790.8 739.3 791.4 741.3 C792 743.4 793 745.8 793.3 747.8 C791 746.1 788.2 745.1 787 743.6 C786 742.2 785.6 740.4 786.3 739.3 Z" fill="#141414"/>
   <circle cx="760.6" cy="731.1" r="4.6" fill="#202024"/>
   <circle cx="759.4" cy="729.5" r="1.7" fill="#e6e6e6"/>
  </g>
  <rect x="819.2" y="718" width="35.6" height="29.5" rx="4" fill="#505050"/>
  <path d="M824.8 723.2 L829.7 725.6 L824.8 728" fill="none" stroke="#f0f0f0" stroke-width="1.3"/>
  <rect x="829.8" y="730" width="6.6" height="1.4" fill="#e8e8e8"/>
</svg>
</div>
</body></html>
